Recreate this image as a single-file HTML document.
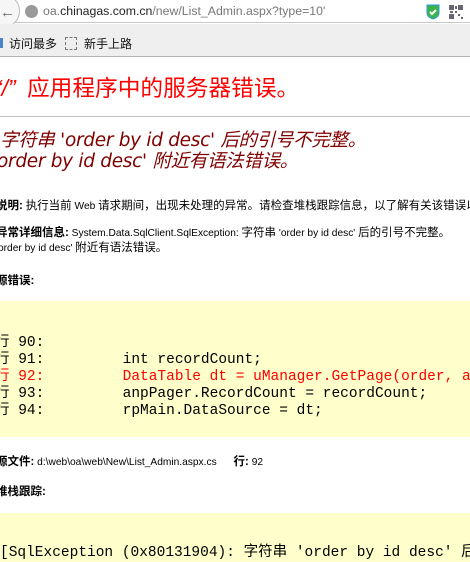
<!DOCTYPE html>
<html><head><meta charset="utf-8">
<style>
*{margin:0;padding:0;box-sizing:border-box}
body{width:470px;height:562px;overflow:hidden;position:relative;background:#fff;font-family:"Liberation Sans","Noto Sans CJK SC",sans-serif;}
.a{position:absolute;white-space:nowrap}
.mono{font-family:"Liberation Mono","Noto Sans CJK SC",monospace;font-size:14.5px;white-space:pre}
.t{font-size:10.2px;color:#000}
.c{font-size:11.5px}
b{font-weight:bold}
.clip{position:absolute;left:0;width:470px;overflow:hidden}
</style></head><body>
<div class="a" style="left:0;top:0;width:470px;height:23px;background:#fff;border-bottom:1px solid #c8c8c8"></div>
<div class="a" style="left:-14px;top:-6px;width:34px;height:34px;border-radius:50%;border:1px solid #bbb;background:#f6f6f6"></div>
<div class="a" style="left:0;top:4px;font-size:15px;color:#666;font-weight:bold">&#8592;</div>
<div class="a" style="left:25px;top:5px;width:13px;height:13px;border-radius:50%;background:#999"></div>
<div class="a" style="left:43px;top:4px;font-size:12.3px;color:#777">oa.<span style="color:#222">chinagas.com.cn</span>/new/List_Admin.aspx?type=10'</div>
<svg class="a" style="left:426px;top:4px" width="14" height="16" viewBox="0 0 14 16"><path d="M1 1h12v8c0 3-3 5-6 6-3-1-6-3-6-6z" fill="#3cb34a" stroke="#2a9bd5"/><path d="M4 8l2 2 4-4" stroke="#fff" stroke-width="2" fill="none"/></svg>
<svg class="a" style="left:449px;top:5px" width="14" height="14" viewBox="0 0 14 14" fill="#667"><rect x="0" y="0" width="5" height="5"/><rect x="9" y="0" width="5" height="5"/><rect x="0" y="9" width="5" height="5"/><rect x="6" y="6" width="2" height="2"/><rect x="9" y="9" width="2" height="2"/><rect x="12" y="12" width="2" height="2"/><rect x="6" y="1" width="2" height="3"/><rect x="1" y="6" width="3" height="2"/></svg>
<div class="a" style="left:0;top:24px;width:470px;height:33px;background:#efefef;border-bottom:1px solid #b5b5b5"></div>
<div class="a" style="left:0;top:38px;width:3px;height:10px;background:#4a86c5"></div>
<div class="a" style="left:9px;top:35px;font-size:12px;color:#111">访问最多</div>
<div class="a" style="left:65px;top:37px;width:12px;height:13px;border:1px dashed #777"></div>
<div class="a" style="left:84px;top:35px;font-size:12px;color:#111">新手上路</div>
<div class="a" style="left:-6px;top:74px;font-size:23px;color:#f00;line-height:28px;font-style:italic">“/”</div>
<div class="a" style="left:27px;top:74px;font-size:22.7px;color:#f00;line-height:28px">应用程序中的服务器错误。</div>
<div class="a" style="left:0;top:116px;width:470px;height:1px;background:#c0c0c0"></div>
<div class="a" style="left:0;top:130px;font-size:18.5px;color:#800000;font-style:italic;line-height:21px;font-family:'DejaVu Sans','Noto Sans CJK SC',sans-serif;letter-spacing:-0.3px">字符串 'order by id desc' 后的引号不完整。<br><span style="margin-left:-3px">order by id desc' 附近有语法错误。</span></div>
<div class="clip" style="top:195px;height:20px"><div class="a t" style="left:-4px;top:2px"><b class="c">说明:</b> <span class="c">执行当前</span> Web <span class="c">请求期间，出现未处理的异常。请检查堆栈跟踪信息，以了解有关该错误以及</span></div></div>
<div class="a t" style="left:-4px;top:226px;line-height:15px"><b class="c">异常详细信息:</b> System.Data.SqlClient.SqlException: <span class="c">字符串</span> 'order by id desc' <span class="c">后的引号不完整。</span><br><span style="margin-left:2px">order by id desc' <span class="c">附近有语法错误。</span></span></div>
<div class="a t" style="left:-4px;top:272px"><b class="c">源错误:</b></div>
<div class="a" style="left:0;top:301px;width:470px;height:136px;background:#ffffcc"></div>
<div class="clip" style="top:330px;height:100px"><div class="a mono" style="left:-5px;top:5px;line-height:17px;color:#000">行 90:
行 91:         int recordCount;
<span style="color:#f00">行 92:         DataTable dt = uManager.GetPage(order, a</span>
行 93:         anpPager.RecordCount = recordCount;
行 94:         rpMain.DataSource = dt;</div></div>
<div class="a t" style="left:-4px;top:453px"><b class="c">源文件:</b> d:\web\oa\web\New\List_Admin.aspx.cs <span style="display:inline-block;width:14px"></span><b class="c">行:</b> 92</div>
<div class="a t" style="left:-4px;top:483px"><b class="c">堆栈跟踪:</b></div>
<div class="a" style="left:0;top:513px;width:470px;height:49px;background:#ffffcc"></div>
<div class="clip" style="top:540px;height:22px"><div class="a mono" style="left:0;top:5px;line-height:17px;color:#000">[SqlException (0x80131904): 字符串 'order by id desc' 后</div></div>
</body></html>
